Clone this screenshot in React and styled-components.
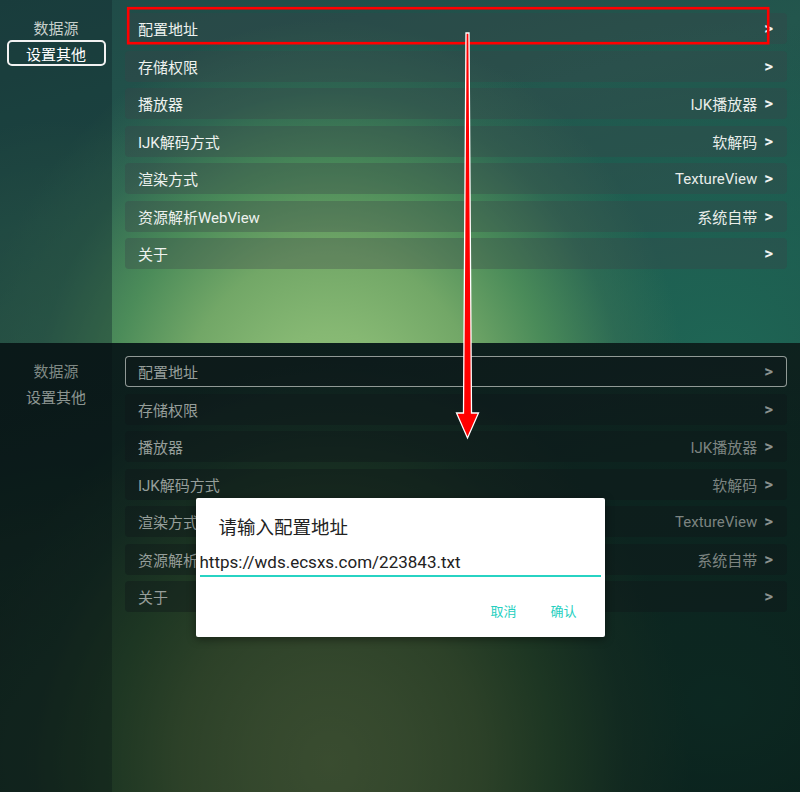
import React from 'react';
import styled, { createGlobalStyle } from 'styled-components';

const GlobalStyle = createGlobalStyle`
  html, body { margin: 0; padding: 0; background: #000; }
  body { font-family: Roboto, "Noto Sans CJK SC", sans-serif; -webkit-font-smoothing: antialiased; }
  #root { width: 800px; height: 792px; }
`;

const BG = `
  radial-gradient(ellipse 360px 400px at 330px 420px, #94c47b 0%, #86b873 22%, #72a767 42%, rgba(78,143,90,0.92) 62%, rgba(56,114,85,0.58) 82%, rgba(40,95,80,0) 100%),
  radial-gradient(ellipse 260px 300px at 60px 420px, rgba(70,130,92,0.75) 0%, rgba(60,120,85,0) 100%),
  radial-gradient(ellipse 420px 340px at 720px 360px, #1f6655 0%, rgba(30,100,84,0.55) 60%, rgba(30,100,84,0) 100%),
  linear-gradient(165deg, #1f4a47 0%, #23564d 35%, #1c4e48 70%, #113733 100%)
`;

const DIM = 'linear-gradient(rgba(0,0,0,0.61), rgba(0,0,0,0.61))';

const Page = styled.div`
  position: relative;
  width: 800px;
  height: 792px;
  overflow: hidden;
  display: flex;
  flex-direction: column;
`;

const Screen = styled.section`
  position: relative;
  flex: none;
  height: ${p => p.$height}px;
  display: grid;
  grid-template-columns: 112px 1fr;
  background: ${p => (p.$dim ? `${DIM}, ${BG}` : BG)};
  background-size: 800px 450px;
  background-repeat: no-repeat;
  background-position: 0 0;
  overflow: hidden;
`;

const Sidebar = styled.nav`
  display: flex;
  flex-direction: column;
  align-items: center;
  padding-top: 14px;
  background: ${p => (p.$dim ? 'rgba(8,18,20,0.3)' : 'rgba(18,40,46,0.4)')};
`;

const SideItem = styled.div`
  width: 99px;
  height: 26px;
  box-sizing: border-box;
  display: flex;
  align-items: center;
  justify-content: center;
  font-size: 15px;
  color: ${p => (p.$dim ? (p.$selected ? '#8c9591' : '#7f8985') : p.$selected ? '#ffffff' : '#c7d0cc')};
  border: 2px solid ${p => (p.$selected && !p.$dim ? '#f2f2f2' : 'transparent')};
  border-radius: 5px;
`;

const List = styled.div`
  display: flex;
  flex-direction: column;
  gap: 6.5px;
  padding: 13px 13px 0 13px;
`;

const Row = styled.div`
  height: 31px;
  box-sizing: border-box;
  display: flex;
  align-items: center;
  justify-content: space-between;
  padding: 0 13px 0 12px;
  border-radius: 4px;
  border: 1px solid ${p => (p.$focused ? 'rgba(190,196,192,0.75)' : 'transparent')};
  background: ${p => (p.$dim ? 'rgba(16,22,24,0.4)' : 'rgba(58,64,72,0.32)')};
  font-size: 15px;
  color: ${p => (p.$dim ? '#969e9a' : '#eef2ef')};
`;

const Value = styled.span`
  display: flex;
  align-items: center;
  gap: 7px;
  color: ${p => (p.$dim ? '#7c8481' : '#e9edea')};
`;

const Chevron = styled.span`
  font-family: Roboto, sans-serif;
  font-size: 17px;
  font-weight: 700;
  line-height: 1;
  color: ${p => (p.$dim ? '#8b928f' : '#f2f4f2')};
`;

const ModalLayer = styled.div`
  position: absolute;
  inset: 0;
  display: flex;
  align-items: center;
  justify-content: center;
`;

const Dialog = styled.div`
  width: 409px;
  height: 139px;
  box-sizing: border-box;
  background: #ffffff;
  border-radius: 2px;
  box-shadow: 0 2px 10px rgba(0, 0, 0, 0.45);
  display: flex;
  flex-direction: column;
  padding: 0 4px;
`;

const DialogTitle = styled.div`
  padding: 19px 0 0 19px;
  font-size: 18.5px;
  line-height: 22px;
  color: #222;
`;

const Field = styled.div`
  margin-top: 13px;
  font-family: Roboto, sans-serif;
  font-size: 17px;
  line-height: 20px;
  color: #222;
  padding-bottom: 3px;
  border-bottom: 2px solid #27d3c3;
`;

const Actions = styled.div`
  margin-top: 27px;
  display: flex;
  justify-content: flex-end;
  gap: 34px;
  padding-right: 24px;
`;

const ActionButton = styled.span`
  font-size: 13px;
  line-height: 16px;
  color: #25cfc0;
`;

const Annotation = styled.svg`
  position: absolute;
  left: 0;
  top: 0;
  pointer-events: none;
`;

const rows = [
  { label: '配置地址', value: '' },
  { label: '存储权限', value: '' },
  { label: '播放器', value: 'IJK播放器' },
  { label: 'IJK解码方式', value: '软解码' },
  { label: '渲染方式', value: 'TextureView' },
  { label: '资源解析WebView', value: '系统自带' },
  { label: '关于', value: '' },
];

function SettingsScreen({ height, dim, children }) {
  return (
    <Screen $height={height} $dim={dim}>
      <Sidebar $dim={dim}>
        <SideItem $dim={dim}>数据源</SideItem>
        <SideItem $dim={dim} $selected>设置其他</SideItem>
      </Sidebar>
      <List>
        {rows.map((r, i) => (
          <Row key={r.label} $dim={dim} $focused={dim && i === 0}>
            <span>{r.label}</span>
            <Value $dim={dim}>
              {r.value && <span>{r.value}</span>}
              <Chevron $dim={dim}>&gt;</Chevron>
            </Value>
          </Row>
        ))}
      </List>
      {children}
    </Screen>
  );
}

export default function App() {
  return (
    <>
      <GlobalStyle />
      <Page>
        <SettingsScreen height={343} />
        <SettingsScreen height={449} dim>
          <ModalLayer>
            <Dialog>
              <DialogTitle>请输入配置地址</DialogTitle>
              <Field>https://wds.ecsxs.com/223843.txt</Field>
              <Actions>
                <ActionButton>取消</ActionButton>
                <ActionButton>确认</ActionButton>
              </Actions>
            </Dialog>
          </ModalLayer>
        </SettingsScreen>
        <Annotation width="800" height="792" viewBox="0 0 800 792">
          <rect x="128.2" y="8.2" width="640" height="35" fill="none" stroke="#ff0000" strokeWidth="2.6" />
          <path
            d="M466 33 L469 33 L471.5 413 L478.5 413 L467.5 438 L456.5 413 L463.5 413 Z"
            fill="#ff0000"
            stroke="#ffffff"
            strokeWidth="1.3"
            strokeLinejoin="miter"
          />
        </Annotation>
      </Page>
    </>
  );
}
